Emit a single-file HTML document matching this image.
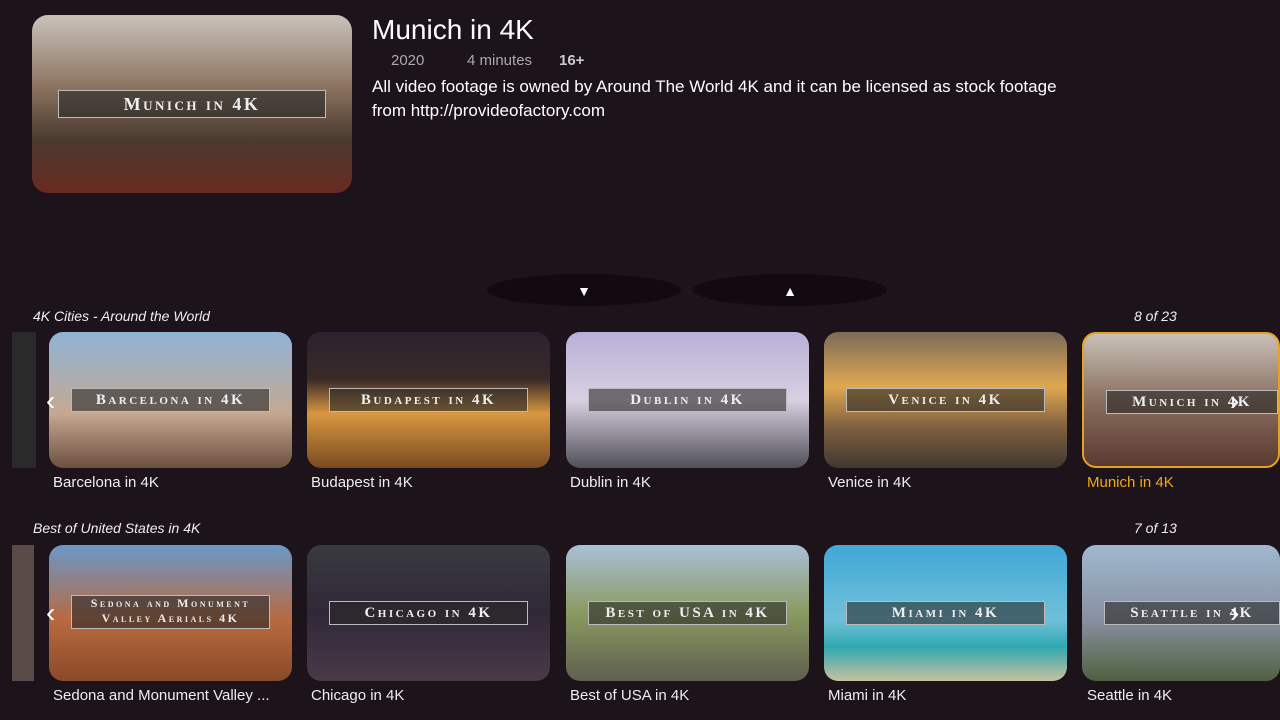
<!DOCTYPE html><html><head><style>
body{margin:0;width:1280px;height:720px;background:#1d131b;font-family:"Liberation Sans",sans-serif;color:#fff;overflow:hidden;position:relative}
.a{position:absolute}
.hero{left:32px;top:15px;width:320px;height:178px;border-radius:16px;background:linear-gradient(180deg,#c9c2bb 0%,#8d7560 40%,#4a3a30 70%,#6a2a20 100%)}
.card{position:absolute;width:243px;height:136px;border-radius:14px;overflow:hidden}
.lbl{position:absolute;left:22px;right:22px;top:56px;height:22px;background:rgba(40,40,40,.6);border:1px solid #bbb;font-family:"Liberation Serif",serif;font-variant:small-caps;font-size:15px;letter-spacing:2.5px;text-align:center;line-height:22px;color:#eee;font-weight:bold}
.t{position:absolute;font-size:15px;color:#eee}
.h{position:absolute;font-size:14px;font-style:italic;color:#eee}
.btn{position:absolute;top:274px;width:194px;height:32px;border-radius:50%;background:#120a10;text-align:center;line-height:34px;font-size:14px}
</style></head><body>
<div class="a hero"><div class="lbl" style="left:26px;right:26px;top:75px;height:26px;line-height:26px;font-size:18px">Munich in 4K</div></div>
<div class="a" style="left:372px;top:14px;font-size:28px">Munich in 4K</div>
<div class="a" style="left:391px;top:52px;font-size:15px;color:#aaa">2020</div>
<div class="a" style="left:467px;top:52px;font-size:15px;color:#aaa">4 minutes</div>
<div class="a" style="left:559px;top:52px;font-size:15px;color:#ccc;font-weight:bold">16+</div>
<div class="a" style="left:372px;top:75px;font-size:17px;line-height:24px;width:720px">All video footage is owned by Around The World 4K and it can be licensed as stock footage from http://provideofactory.com</div>
<div class="btn" style="left:487px">▼</div><div class="btn" style="left:693px">▲</div>
<div class="h" style="left:33px;top:308px">4K Cities - Around the World</div>
<div class="h" style="left:1134px;top:308px">8 of 23</div>
<div class="a" style="left:12px;top:332px;width:24px;height:136px;background:#2a2a2a"></div>
<div class="card" style="left:49px;top:332px;background:linear-gradient(180deg,#8fb3d8,#c4a890 60%,#6d5040)"><div class="lbl">Barcelona in 4K</div></div>
<div class="card" style="left:307px;top:332px;background:linear-gradient(180deg,#2a2230,#3a2a28 35%,#d89840 60%,#7a4a20)"><div class="lbl">Budapest in 4K</div></div>
<div class="card" style="left:566px;top:332px;background:linear-gradient(180deg,#b8b0d8,#d8d0e0 50%,#505058)"><div class="lbl">Dublin in 4K</div></div>
<div class="card" style="left:824px;top:332px;background:linear-gradient(180deg,#7a6a58,#e0a850 40%,#806040 70%,#403830)"><div class="lbl">Venice in 4K</div></div>
<div class="card" style="left:1082px;top:332px;width:198px;border:2px solid #e8a020;box-sizing:border-box;background:linear-gradient(180deg,#c8c0b8,#8a7060 50%,#5a3a30)"><div class="lbl" style="right:0">Munich in 4K</div></div>
<div class="t" style="left:53px;top:474px">Barcelona in 4K</div>
<div class="t" style="left:311px;top:474px">Budapest in 4K</div>
<div class="t" style="left:570px;top:474px">Dublin in 4K</div>
<div class="t" style="left:828px;top:474px">Venice in 4K</div>
<div class="t" style="left:1087px;top:474px;color:#f0a818">Munich in 4K</div>
<div class="h" style="left:33px;top:520px">Best of United States in 4K</div>
<div class="h" style="left:1134px;top:520px">7 of 13</div>
<div class="a" style="left:12px;top:545px;width:22px;height:136px;background:#5a4a48"></div>
<div class="card" style="left:49px;top:545px;background:linear-gradient(180deg,#6a98c8,#b86a40 55%,#8a4a28)"><div class="lbl" style="top:50px;height:32px;line-height:15px;font-size:12px">Sedona and Monument Valley Aerials 4K</div></div>
<div class="card" style="left:307px;top:545px;background:linear-gradient(180deg,#3a3a40,#302838 50%,#4a3a48)"><div class="lbl">Chicago in 4K</div></div>
<div class="card" style="left:566px;top:545px;background:linear-gradient(180deg,#a8c0d8,#8a9a60 50%,#606050)"><div class="lbl">Best of USA in 4K</div></div>
<div class="card" style="left:824px;top:545px;background:linear-gradient(180deg,#40a8d8,#70c0d8 55%,#30a8b0 75%,#c8c0a0)"><div class="lbl">Miami in 4K</div></div>
<div class="card" style="left:1082px;top:545px;width:198px;background:linear-gradient(180deg,#a0b8d0,#8890a0 55%,#506040)"><div class="lbl" style="right:0">Seattle in 4K</div></div>
<div class="t" style="left:53px;top:687px">Sedona and Monument Valley ...</div>
<div class="t" style="left:311px;top:687px">Chicago in 4K</div>
<div class="t" style="left:570px;top:687px">Best of USA in 4K</div>
<div class="t" style="left:828px;top:687px">Miami in 4K</div>
<div class="t" style="left:1087px;top:687px">Seattle in 4K</div>
<div class="a" style="left:46px;top:385px;font-size:28px">‹</div>
<div class="a" style="left:1230px;top:385px;font-size:28px">›</div>
<div class="a" style="left:46px;top:597px;font-size:28px">‹</div>
<div class="a" style="left:1230px;top:597px;font-size:28px">›</div>
</body></html>
